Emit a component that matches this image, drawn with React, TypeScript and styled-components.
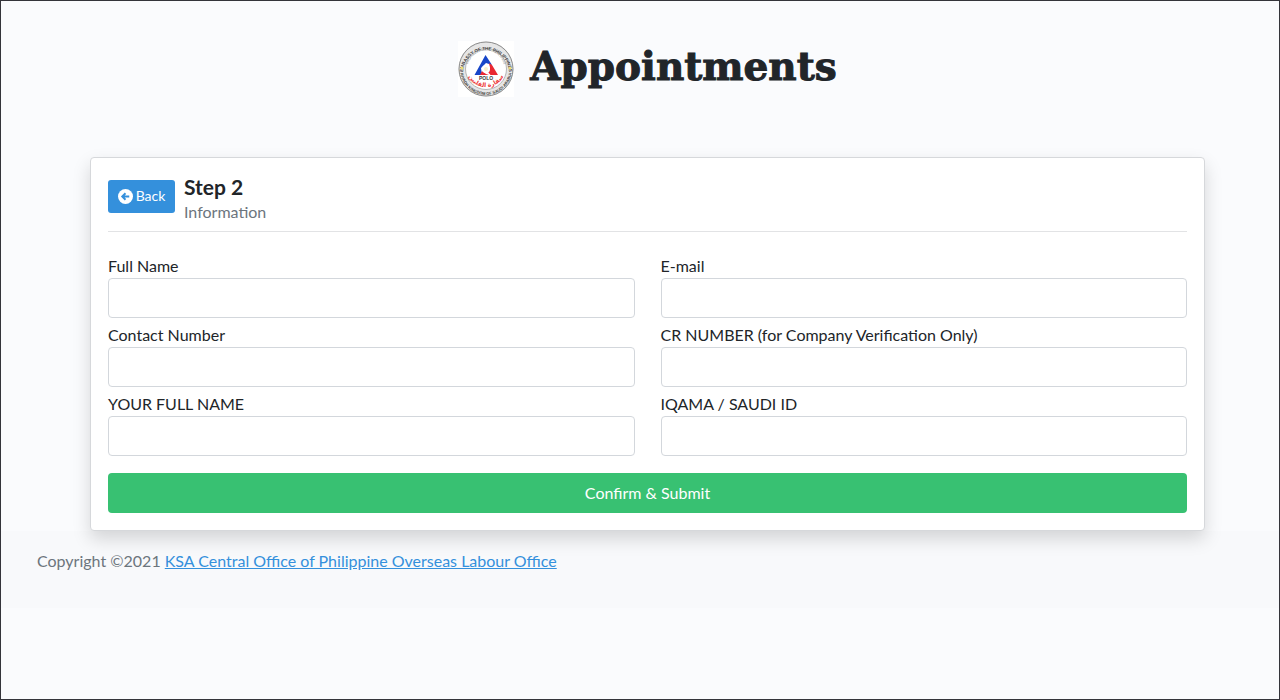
import React from 'react';
import styled, { createGlobalStyle } from 'styled-components';

const GlobalStyle = createGlobalStyle`
  *, *::before, *::after { box-sizing: border-box; }
  body {
    margin: 0;
    background: #fafbfd;
    color: #212529;
    font-family: Lato, "Liberation Sans", sans-serif;
    font-size: 16px;
    line-height: 26px;
  }
`;

const Page = styled.div`
  min-height: 100vh;
  border: 1px solid #34343a;
`;

const Container = styled.main`
  position: relative;
  z-index: 1;
  padding: 40px 74px 0 89px;
`;

const Brand = styled.header`
  display: flex;
  justify-content: center;
  align-items: center;
  gap: 16px;
  height: 56px;
  margin-bottom: 60px;
`;

const BrandName = styled.h1`
  margin: 0 0 6px;
  font-family: "DejaVu Serif", serif;
  font-size: 39px;
  font-weight: 700;
  line-height: 56px;
  -webkit-text-stroke: 1px #212529;
`;

const Card = styled.form`
  padding: 17px;
  background: #fff;
  border: 1px solid #d6d8db;
  border-radius: 4px;
  box-shadow: 0 8px 18px rgba(0, 0, 0, 0.15);
`;

const CardHeader = styled.div`
  display: flex;
  align-items: center;
  gap: 9px;
  padding-bottom: 6px;
  margin-bottom: 22px;
  border-bottom: 1px solid #e2e3e5;
`;

const BackButton = styled.button`
  display: flex;
  align-items: center;
  justify-content: center;
  gap: 3px;
  width: 67px;
  height: 33px;
  margin-bottom: 8px;
  padding: 0;
  border: 0;
  border-radius: 3px;
  background: #3490dc;
  color: #fff;
  font: inherit;
  font-size: 14px;
`;

const StepTitle = styled.h2`
  margin: 0;
  font-size: 21px;
  font-weight: 700;
  line-height: 24px;
`;

const StepCaption = styled.p`
  margin: 0;
  color: #6c757d;
`;

const Fields = styled.div`
  display: grid;
  grid-template-columns: 1fr 1fr;
  gap: 5px 26px;
  margin-bottom: 17px;
`;

const Field = styled.label`
  display: flex;
  flex-direction: column;
  line-height: 24px;
`;

const TextInput = styled.input`
  width: 100%;
  height: 40px;
  padding: 6px 12px;
  border: 1px solid #d3d7dc;
  border-radius: 4px;
  background: #fff;
  font: inherit;
`;

const SubmitButton = styled.button`
  display: block;
  width: 100%;
  height: 40px;
  border: 0;
  border-radius: 4px;
  background: #38c172;
  color: #fff;
  font: inherit;
`;

const Footer = styled.footer`
  padding: 17px 36px 34px;
  background: #f8f9fb;
  color: #6c757d;
`;

const FooterLink = styled.a`
  color: #3490dc;
  text-decoration: underline;
`;

const fields = [
  { name: 'fullName', label: 'Full Name', type: 'text' },
  { name: 'email', label: 'E-mail', type: 'email' },
  { name: 'contact', label: 'Contact Number', type: 'tel' },
  { name: 'crNumber', label: 'CR NUMBER (for Company Verification Only)', type: 'text' },
  { name: 'yourFullName', label: 'YOUR FULL NAME', type: 'text' },
  { name: 'iqama', label: 'IQAMA / SAUDI ID', type: 'text' },
];

function Seal() {
  return (
    <svg width="56" height="56" viewBox="0 0 56 56" role="img" aria-label="Embassy seal">
      <defs>
        <path id="topArc" d="M5 32 A23 23 0 1 1 51 32" />
        <path id="bottomArc" d="M2 28 A26 26 0 0 0 54 28" />
        <path id="innerArc" d="M9.5 28 A18.5 18.5 0 0 1 46.5 28" />
        <path id="redArc" d="M9 31 A19.5 19.5 0 0 0 47 31" />
      </defs>
      <rect width="56" height="56" fill="#fff" />
      <circle cx="28" cy="28" r="24" fill="none" stroke="#e6e6e6" strokeWidth="7" />
      <circle cx="28" cy="28" r="27" fill="none" stroke="#8c8c8c" strokeWidth="1" />
      <circle cx="28" cy="28" r="20.5" fill="#fff" stroke="#b5b5b5" strokeWidth="1" />
      <g fontFamily="Liberation Sans, sans-serif" fontWeight="700" fill="#3d3d3d" textAnchor="middle">
        <text fontSize="4.5"><textPath href="#topArc" startOffset="50%">EMBASSY OF THE PHILIPPINES</textPath></text>
        <text fontSize="4"><textPath href="#bottomArc" startOffset="50%">RIYADH KINGDOM OF SAUDI ARABIA</textPath></text>
        <text fontSize="2.5" fill="#888"><textPath href="#innerArc" startOffset="50%">PHILIPPINE OVERSEAS LABOR OFFICE</textPath></text>
        <text x="28" y="39" fontSize="5">POLO</text>
      </g>
      <text fontFamily="DejaVu Sans, sans-serif" fontSize="6" fontWeight="700" fill="#ed3a3a" textAnchor="middle">
        <textPath href="#redArc" startOffset="50%">سفارة الفلبين</textPath>
      </text>
      <path d="M27.5 14 L34 24 L28 22 L23 27 L24 34 L16.5 34 Z" fill="#1746c8" />
      <path d="M34 24 L40 34 L32.5 34 L30 31 L32 27 L31 22 Z" fill="#e92832" />
      <path d="M22 34 L24 30 L28 33 L31 34 Z" fill="#e92832" />
      <circle cx="28" cy="28" r="4" fill="#fff" />
      <circle cx="28" cy="28" r="2" fill="#f6efcf" />
      <circle cx="4" cy="27" r="1.5" fill="#e9dc78" />
      <circle cx="52" cy="27" r="1.5" fill="#e9dc78" />
    </svg>
  );
}

function BackIcon() {
  return (
    <svg width="15" height="15" viewBox="0 0 16 16" aria-hidden="true">
      <circle cx="8" cy="8" r="8" fill="#fff" />
      <path d="M12 8 H5 M8 4.5 L4.5 8 L8 11.5" fill="none" stroke="#3490dc" strokeWidth="2" />
    </svg>
  );
}

export default function App() {
  return (
    <Page>
      <GlobalStyle />
      <Container>
        <Brand>
          <Seal />
          <BrandName>Appointments</BrandName>
        </Brand>
        <Card onSubmit={(event) => event.preventDefault()}>
          <CardHeader>
            <BackButton type="button"><BackIcon />Back</BackButton>
            <div>
              <StepTitle>Step 2</StepTitle>
              <StepCaption>Information</StepCaption>
            </div>
          </CardHeader>
          <Fields>
            {fields.map((field) => (
              <Field key={field.name} htmlFor={field.name}>
                {field.label}
                <TextInput id={field.name} name={field.name} type={field.type} />
              </Field>
            ))}
          </Fields>
          <SubmitButton type="submit">Confirm &amp; Submit</SubmitButton>
        </Card>
      </Container>
      <Footer>
        Copyright ©2021 <FooterLink href="#">KSA Central Office of Philippine Overseas Labour Office</FooterLink>
      </Footer>
    </Page>
  );
}
